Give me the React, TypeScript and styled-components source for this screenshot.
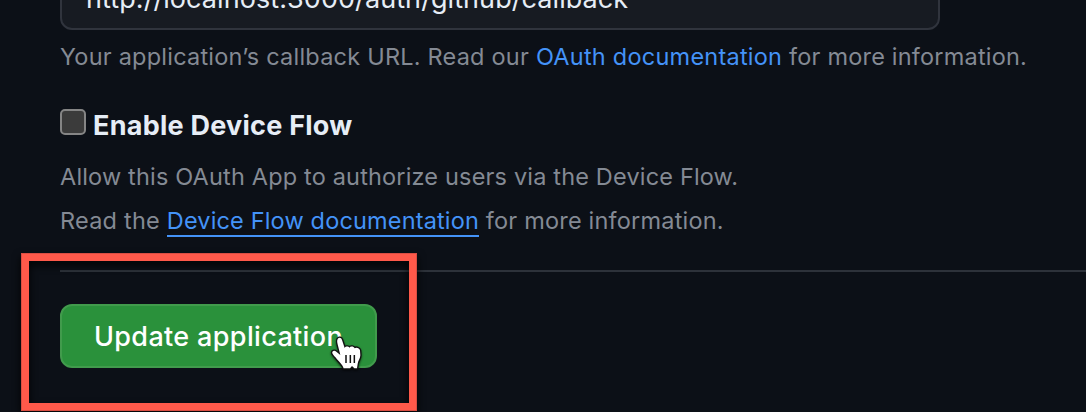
import React from "react";
import styled, { createGlobalStyle } from "styled-components";

const GlobalStyle = createGlobalStyle`
  html, body { margin: 0; background: #0c1017; }
  * { box-sizing: border-box; }
`;

const Page = styled.main`
  position: relative;
  width: 1086px;
  height: 412px;
  padding-left: 60px;
  overflow: hidden;
  background: #0c1017;
  color: #e6edf6;
  font-family: Inter, "Liberation Sans", sans-serif;
  display: flex;
  flex-direction: column;
  align-items: flex-start;
`;

const UrlField = styled.div`
  flex: none;
  display: flex;
  align-items: center;
  width: 880px;
  height: 64px;
  margin-top: -34px;
  padding: 2px 24px 0;
  border: 2px solid #30343d;
  border-radius: 12px;
  background: #171b22;
  font-size: 27px;
  line-height: 40px;
  letter-spacing: 0.07px;
`;

const Help = styled.p<{ $top: number }>`
  flex: none;
  margin: ${(p) => p.$top}px 0 0;
  height: 36px;
  font-size: 23.5px;
  line-height: 36px;
  color: #848a94;
  white-space: pre;
`;

const Run = styled.span<{ $track?: number }>`
  letter-spacing: ${(p) => p.$track ?? 0}px;
`;

const Link = styled.a<{ $track?: number; $underlined?: boolean }>`
  display: inline-block;
  height: 34px;
  color: #4493f8;
  letter-spacing: ${(p) => p.$track ?? 0}px;
  border-bottom: ${(p) => (p.$underlined ? "2px solid #4493f8" : "0")};
  text-decoration: none;
`;

const CheckRow = styled.label`
  flex: none;
  display: flex;
  align-items: flex-start;
  gap: 7px;
  height: 40px;
  margin-top: 30px;
`;

const Checkbox = styled.span`
  width: 26px;
  height: 26px;
  margin-top: 4px;
  border: 2px solid #858585;
  border-radius: 5px;
  background: #3b3b3b;
`;

const CheckLabel = styled.span`
  padding-top: 1px;
  font-size: 27px;
  font-weight: 700;
  line-height: 40px;
  letter-spacing: 0.25px;
  white-space: nowrap;
`;

const Divider = styled.hr`
  flex: none;
  width: 1026px;
  height: 2px;
  margin: 31px 0 32px;
  border: 0;
  background: #2d323a;
`;

const UpdateButton = styled.button`
  flex: none;
  width: 317px;
  height: 64px;
  padding: 2px 0 0;
  border: 2px solid #419b4c;
  border-radius: 12px;
  background: #2a913b;
  color: #fff;
  font-family: inherit;
  font-size: 27px;
  font-weight: 500;
  line-height: 40px;
  letter-spacing: 0.35px;
  white-space: nowrap;
`;

const Highlight = styled.div`
  position: absolute;
  left: 21px;
  top: 253px;
  width: 396px;
  height: 158px;
  border: 8px solid #ff594a;
  outline: 1px solid #d94e42;
  outline-offset: -1px;
  filter: drop-shadow(0 4px 4px rgba(0, 0, 0, 0.9));
  pointer-events: none;
`;

const Pointer = styled.svg`
  position: absolute;
  left: 320px;
  top: 325px;
  width: 60px;
  height: 55px;
  filter: drop-shadow(0 1px 1px rgba(0, 0, 0, 0.6));
`;

export default function App() {
  return (
    <>
      <GlobalStyle />
      <Page>
        <UrlField>http://localhost:3000/auth/github/callback</UrlField>
        <Help $top={9}>
          <Run $track={0.22}>Your application’s callback URL. Read our </Run>
          <Link $track={0.24}>OAuth documentation</Link>
          <Run $track={0.2}> for more information.</Run>
        </Help>
        <CheckRow>
          <Checkbox />
          <CheckLabel>Enable Device Flow</CheckLabel>
        </CheckRow>
        <Help $top={14}>
          <Run $track={0.17}>Allow this OAuth App to authorize users via the Device Flow.</Run>
        </Help>
        <Help $top={8}>
          <Run $track={0.22}>Read the </Run>
          <Link $underlined $track={0.16}>Device Flow documentation</Link>
          <Run $track={0.2}> for more information.</Run>
        </Help>
        <Divider />
        <UpdateButton>Update application</UpdateButton>
        <Highlight />
        <Pointer viewBox="0 0 180 165">
          <path
            d="M53 42 C57 36 64 38 66 45 L74 69 C76 64 85 63 88 68 C92 63 101 64 104 70 C109 66 118 69 120 76 L121 91 C121 100 114 108 113 116 L111 130 L103 130 L96 123 L90 130 L71 130 C68 119 58 111 51 103 C46 96 40 91 37 85 C35 78 43 75 49 80 L61 90 L54 62 C52 54 50 48 53 42 Z"
            fill="#fff"
            stroke="#111"
            strokeWidth="8"
            strokeLinejoin="round"
            paintOrder="stroke"
          />
          <path d="M78 90 V114 M91 90 V114 M103 90 V114" fill="none" stroke="#111" strokeWidth="4.5" />
        </Pointer>
      </Page>
    </>
  );
}
